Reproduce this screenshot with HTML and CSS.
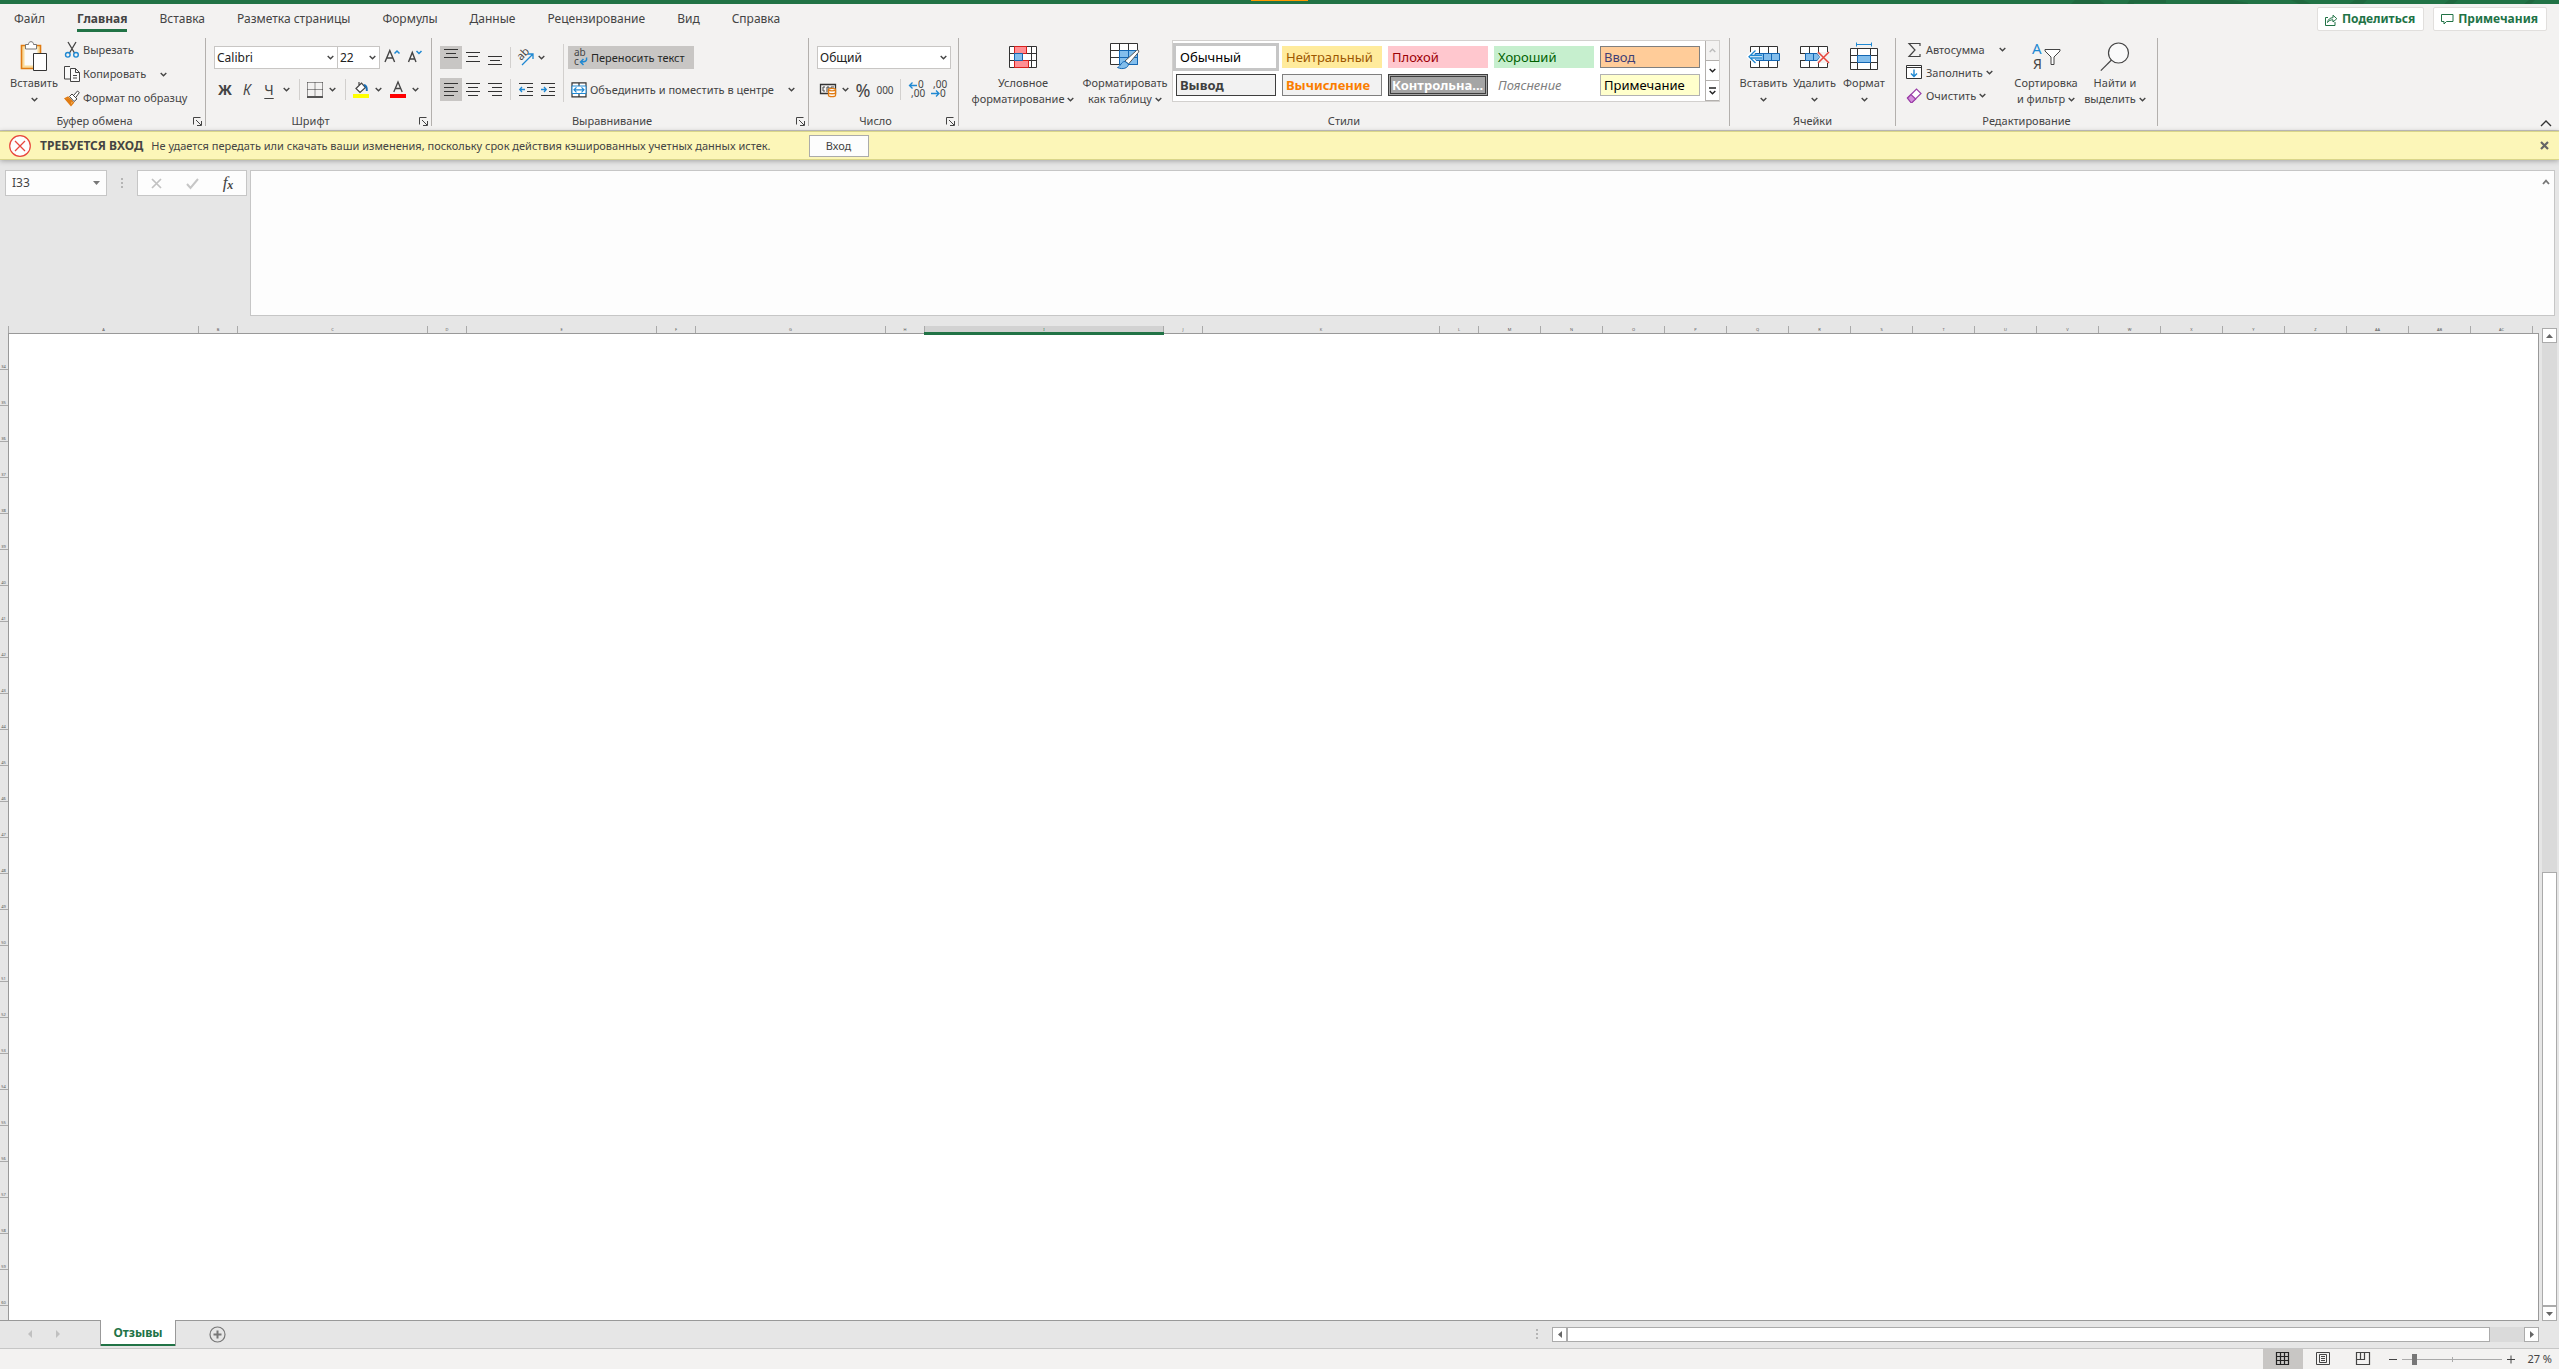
FILE: index.html
```html
<!DOCTYPE html>
<html lang="ru">
<head>
<meta charset="utf-8">
<title>Отзывы</title>
<link rel="stylesheet" href="styles.css">
</head>
<body>
<svg class="defs" aria-hidden="true">
  <symbol id="chev" viewBox="0 0 7 5"><path d="M.7 1 3.5 3.7 6.3 1" fill="none" stroke="currentColor" stroke-width="1.4"/></symbol>
  <symbol id="launch" viewBox="0 0 9 9"><path d="M.5 7.500V.5H7.500M3 3l5 5M8.500 4v4.500H4" fill="none" stroke="#444"/></symbol>
</svg>

<div class="title-strip">
  <span class="title-mark"></span>
  <svg class="title-art" width="500" height="4" viewBox="0 0 500 4" aria-hidden="true"><path d="M12 4 16 0h24l6 4M68 4l3-4h36v3H75v1zM141 0h32l16 3v1h-48zM232 0h12l8 4h-12zM296 0h12l-4 4h-14zM390 0h9l-5 4h-9zM470 0h6l-4 4h-7z" fill="#1f683f"/></svg>
</div>

<header class="tabbar">
  <nav class="tabs">
    <button class="tab">Файл</button>
    <button class="tab active">Главная</button>
    <button class="tab">Вставка</button>
    <button class="tab">Разметка страницы</button>
    <button class="tab">Формулы</button>
    <button class="tab">Данные</button>
    <button class="tab">Рецензирование</button>
    <button class="tab">Вид</button>
    <button class="tab">Справка</button>
  </nav>
  <button class="share"><svg width="13" height="13" viewBox="0 0 13 13"><path d="M3 4.500H.5v8h9.500V9M2.500 9.500C3 6.500 5 4.700 8 4.700V2.200L11.800 5.700 8 9V6.800c-2.500 0-4 .7-5.500 2.700z" fill="none" stroke="#217346"/></svg>Поделиться</button>
  <button class="share"><svg width="13" height="13" viewBox="0 0 13 13"><path d="M.5 1.500h11.500v7H5.500L3 11V8.500H.5z" fill="none" stroke="#217346"/></svg>Примечания</button>
</header>

<section class="ribbon">
  <div class="group g-clip">
    <div class="body">
      <button class="big paste">
        <span class="ico"><svg width="28" height="31" viewBox="0 0 28 31"><path d="M1.500 4.500h19v23h-19z" fill="#fadb9b" stroke="#e07b12" stroke-width="1.600"/><path d="M4.500 7.500h13v17h-13z" fill="#fbfbfa"/><path d="M5.500 8V3.500h3C8.500 1.500 9.500.7 11 .7s2.500.8 2.500 2.800h3V8z" fill="#fff" stroke="#777"/><path d="M13.500 12.500h13v17h-13z" fill="#fff" stroke="#333"/></svg></span>
        <span class="line">Вставить</span><span class="line"><svg class="chev"><use href="#chev"/></svg></span>
      </button>
      <div class="stack">
        <button class="row"><svg width="16" height="18" viewBox="0 0 16 18"><path d="M4 1l6.500 11M12 1 5.500 12" fill="none" stroke="#444" stroke-width="1.300"/><circle cx="3.800" cy="13.800" r="2.300" fill="none" stroke="#1e88d2" stroke-width="1.400"/><circle cx="12" cy="13.800" r="2.300" fill="none" stroke="#1e88d2" stroke-width="1.400"/></svg>Вырезать</button>
        <button class="row"><svg width="16" height="18" viewBox="0 0 16 18"><path d="M6 14H.5V1.500H6M6.500 3.500h5l4 4v9h-9z" fill="#fafafa" stroke="#444"/><path d="M11.500 3.500v4h4M9 10.500h4M9 13h4" fill="none" stroke="#444"/></svg>Копировать<svg class="chev far"><use href="#chev"/></svg></button>
        <button class="row"><svg width="16" height="16" viewBox="0 0 16 16"><path d="M1 8.500 4 7l5.500 5.500L7 15.500z" fill="#fadb9b" stroke="#e07b12" stroke-width="1.300"/><path d="M1 8.500 7 15l1-4-4-3z" fill="#e07b12"/><path d="M5.500 6.500 8 4l5 5-3 2.500zM9.500 5.500 13.500 1l1.800 1.500-3.500 5" fill="#fff" stroke="#444"/></svg>Формат по образцу</button>
      </div>
    </div>
    <div class="foot"><span>Буфер обмена</span><button class="launcher" aria-label="Буфер обмена"><svg width="9" height="9"><use href="#launch"/></svg></button></div>
  </div>
  <div class="divider"></div>

  <div class="group g-font">
    <div class="body tools">
      <div class="line-row">
        <span class="combo family"><select aria-label="Шрифт"><option>Calibri</option></select><svg class="chev"><use href="#chev"/></svg></span><span class="combo size"><select aria-label="Размер шрифта"><option>22</option></select><svg class="chev"><use href="#chev"/></svg></span>
        <button class="tool grow" aria-label="Увеличить размер шрифта"><svg width="17" height="17" viewBox="0 0 17 17"><path d="M1 13 5.800 1.500 10.600 13M2.600 9h6.400" fill="none" stroke="#444" stroke-width="1.400"/><path d="M10.500 4.500 13 2 15.500 4.500" fill="none" stroke="#1e88d2" stroke-width="1.500"/></svg></button>
        <button class="tool" aria-label="Уменьшить размер шрифта"><svg width="15" height="17" viewBox="0 0 15 17"><path d="M1.500 13 5.300 3.500 9 13M2.800 10h5" fill="none" stroke="#444" stroke-width="1.400"/><path d="M9.500 2 12 4.500 14.500 2" fill="none" stroke="#1e88d2" stroke-width="1.500"/></svg></button>
      </div>
      <div class="line-row">
        <button class="tool b">Ж</button><button class="tool i">К</button><button class="tool u">Ч</button><button class="drop" aria-label="Подчёркивание"><svg class="chev"><use href="#chev"/></svg></button>
        <span class="vsep"></span>
        <button class="tool" aria-label="Границы"><svg width="16" height="16" viewBox="0 0 16 16"><path d="M.5.5h15M.5.5v13M15.500.5v13M8 .5v13M.5 7.500h15" fill="none" stroke="#333" stroke-dasharray="1 1"/><path d="M0 15h16" stroke="#111" stroke-width="1.400"/></svg></button><button class="drop" aria-label="Виды границ"><svg class="chev"><use href="#chev"/></svg></button>
        <span class="vsep"></span>
        <button class="tool" aria-label="Цвет заливки"><svg width="16" height="17" viewBox="0 0 16 17"><path d="M3 7.500 8.500 2l4 4.500-5.500 5zM6 1v4" fill="#fff" stroke="#444" stroke-width="1.200"/><path d="M11 4c2.500.5 3 3 2.800 6" fill="none" stroke="#1b6fb5" stroke-width="2"/><path d="M0 13h16v4H0z" fill="#ff0"/></svg></button><button class="drop" aria-label="Выбор заливки"><svg class="chev"><use href="#chev"/></svg></button>
        <button class="tool color" aria-label="Цвет шрифта"><svg width="16" height="17" viewBox="0 0 16 17"><path d="M3.800 11 8 1l4.200 10M5.200 7.500h5.600" fill="none" stroke="#444" stroke-width="1.300"/><path d="M0 13h16v4H0z" fill="red"/></svg></button><button class="drop" aria-label="Выбор цвета"><svg class="chev"><use href="#chev"/></svg></button>
      </div>
    </div>
    <div class="foot"><span>Шрифт</span><button class="launcher" aria-label="Шрифт"><svg width="9" height="9"><use href="#launch"/></svg></button></div>
  </div>
  <div class="divider"></div>

  <div class="group g-align">
    <div class="body split">
      <div class="tools">
        <div class="line-row">
          <button class="tool on" aria-label="По верхнему краю"><svg width="14" height="17" viewBox="0 0 14 17"><path d="M0 0.500h14M2 4.500h10M0 8.500h14" stroke="#333"/></svg></button><button class="tool" aria-label="По середине"><svg width="14" height="17" viewBox="0 0 14 17"><path d="M0 3.500h14M2 7.500h10M0 12.500h14" stroke="#333"/></svg></button><button class="tool" aria-label="По нижнему краю"><svg width="14" height="17" viewBox="0 0 14 17"><path d="M0 7.500h14M2 11.500h10M0 15.500h14" stroke="#333"/></svg></button>
          <span class="vsep"></span>
          <button class="tool slim" aria-label="Ориентация"><svg width="17" height="17" viewBox="0 0 17 17"><text x="0" y="0" transform="translate(4 12) rotate(-45)" font-size="11" fill="#444">ab</text><path d="M5 16 15.500 5.500M11 5h5v5" fill="none" stroke="#1e88d2" stroke-width="1.300"/></svg></button><button class="drop" aria-label="Выбор ориентации"><svg class="chev"><use href="#chev"/></svg></button>
        </div>
        <div class="line-row">
          <button class="tool on" aria-label="По левому краю"><svg width="14" height="15" viewBox="0 0 14 15"><path d="M0 1.500h14M0 5.500h10M0 9.500h14M0 13.500h10" stroke="#333"/></svg></button><button class="tool" aria-label="По центру"><svg width="14" height="15" viewBox="0 0 14 15"><path d="M0 1.500h14M2 5.500h10M0 9.500h14M2 13.500h10" stroke="#333"/></svg></button><button class="tool" aria-label="По правому краю"><svg width="14" height="15" viewBox="0 0 14 15"><path d="M0 1.500h14M4 5.500h10M0 9.500h14M4 13.500h10" stroke="#333"/></svg></button>
          <span class="vsep"></span>
          <button class="tool" aria-label="Уменьшить отступ"><svg width="14" height="15" viewBox="0 0 14 15"><path d="M0 1.500h14M8 5.500h6M8 9.500h6M0 13.500h14" stroke="#333"/><path d="M6 7.500H1M3 5 .7 7.500 3 10" fill="none" stroke="#1e88d2" stroke-width="1.300"/></svg></button><button class="tool" aria-label="Увеличить отступ"><svg width="14" height="15" viewBox="0 0 14 15"><path d="M0 1.500h14M8 5.500h6M8 9.500h6M0 13.500h14" stroke="#333"/><path d="M0 7.500h5M3 5l2.300 2.500L3 10" fill="none" stroke="#1e88d2" stroke-width="1.300"/></svg></button>
        </div>
      </div>
      <span class="vsep tall"></span>
      <div class="tools">
        <button class="label-tool on"><svg width="16" height="17" viewBox="0 0 16 17"><text x="2" y="7" font-size="10" fill="#444">ab</text><text x="2" y="16" font-size="10" fill="#444">c</text><path d="M14.500 8.500c.8 3.500-1 4.500-6 4.500M11.500 10 8.500 13l3 3" fill="none" stroke="#1e88d2" stroke-width="1.500"/></svg>Переносить текст</button>
        <div class="line-row"><button class="label-tool"><svg width="16" height="16" viewBox="0 0 16 16"><path d="M1 .8h14v14H1zM8 1v14" fill="#fff" stroke="#333" stroke-width="1.200"/><path d="M1 4h14v7.500H1z" fill="#fff" stroke="#1e88d2"/><path d="M3 7.800h10M5.500 5.300 3 7.800l2.500 2.500M10.500 5.300 13 7.800l-2.500 2.500" fill="none" stroke="#1e88d2" stroke-width="1.200"/></svg>Объединить и поместить в центре</button><button class="drop gap" aria-label="Варианты объединения"><svg class="chev"><use href="#chev"/></svg></button></div>
      </div>
    </div>
    <div class="foot"><span>Выравнивание</span><button class="launcher" aria-label="Выравнивание"><svg width="9" height="9"><use href="#launch"/></svg></button></div>
  </div>
  <div class="divider"></div>

  <div class="group g-num">
    <div class="body tools">
      <span class="combo format"><select aria-label="Числовой формат"><option>Общий</option></select><svg class="chev"><use href="#chev"/></svg></span>
      <div class="line-row">
        <button class="tool" aria-label="Финансовый формат"><svg width="17" height="14" viewBox="0 0 17 14"><path d="M.5 1.500h15v9H.5z" fill="none" stroke="#333" stroke-width="1.300"/><path d="M5 4H3v4h2M7 9V4h2v2M11 4h3M11 4v2" fill="none" stroke="#444"/><path d="M8.500 6.500c0-1.500 7-1.500 7 0v6c0 1.500-7 1.500-7 0z" fill="#fff" stroke="#e07b12" stroke-width="1.300"/><path d="M8.500 7c1 1.200 6 1.200 7 0M8.500 10c1 1 6 1 7 0" fill="none" stroke="#e07b12" stroke-width="1.300"/></svg></button><button class="drop" aria-label="Выбор валюты"><svg class="chev"><use href="#chev"/></svg></button>
        <button class="tool pct">%</button><button class="tool zeros">000</button>
        <span class="vsep"></span>
        <button class="tool" aria-label="Увеличить разрядность"><svg width="17" height="17" viewBox="0 0 17 17"><text x="10" y="7" font-size="10" fill="#444">0</text><text x="3" y="16" font-size="10" fill="#444">,00</text><path d="M9 4.500H1.500M4.500 1.500l-3 3 3 3" fill="none" stroke="#1e88d2" stroke-width="1.300"/></svg></button><button class="tool" aria-label="Уменьшить разрядность"><svg width="17" height="17" viewBox="0 0 17 17"><text x="3" y="7" font-size="10" fill="#444">,00</text><text x="10" y="16" font-size="10" fill="#444">0</text><path d="M1 12.500h8M6 9.500l3 3-3 3" fill="none" stroke="#1e88d2" stroke-width="1.300"/></svg></button>
      </div>
    </div>
    <div class="foot"><span>Число</span><button class="launcher" aria-label="Число"><svg width="9" height="9"><use href="#launch"/></svg></button></div>
  </div>
  <div class="divider"></div>

  <div class="group g-style">
    <div class="body">
      <button class="big cond">
        <span class="ico"><svg width="28" height="22" viewBox="0 0 28 22"><path d="M.5.5h27v21H.5zM5.500.5v21M22.500.5v21M.5 7.500h27M.5 14.500h27" fill="#fff" stroke="#333"/><path d="M5.500.5h12v7h-12zM5.500 14.500h14v7h-14z" fill="#ff8f94" stroke="#d8201c"/><path d="M5.500 7.500h8v7h-8z" fill="#83beec" stroke="#1467b3"/></svg></span>
        <span class="line">Условное</span><span class="line">форматирование<svg class="chev near"><use href="#chev"/></svg></span>
      </button>
      <button class="big fmt">
        <span class="ico"><svg width="30" height="27" viewBox="0 0 30 27"><path d="M.5.500h27v21H.5zM9.500.500v21M18.500.500v21M.5 7.500h27M.5 14.500h27" fill="#fff" stroke="#333"/><path d="M9.500 7.500h18v14h-18zM18.500 7.500v14M9.500 14.500h18" fill="#83beec" stroke="#1467b3"/><path d="M15 18 26.500 7.500c1.500-1 3 0 2 1.700L18.500 21z" fill="#fff" stroke="#555"/><path d="M15 18.500c-4 0-4 4.500-7.500 6 5 2.500 11 .5 11-3.500z" fill="#83beec" stroke="#1467b3"/></svg></span>
        <span class="line">Форматировать</span><span class="line">как таблицу<svg class="chev near"><use href="#chev"/></svg></span>
      </button>
      <div class="gallery">
        <div class="cells">
          <button class="st normal">Обычный</button><button class="st neutral">Нейтральный</button><button class="st bad">Плохой</button><button class="st good">Хороший</button><button class="st input">Ввод</button>
          <button class="st output">Вывод</button><button class="st calc">Вычисление</button><button class="st check">Контрольна...</button><button class="st explain">Пояснение</button><button class="st note">Примечание</button>
        </div>
        <div class="gallery-nav">
          <button class="dim" aria-label="Вверх"><svg class="chev up"><use href="#chev"/></svg></button>
          <button aria-label="Вниз"><svg class="chev"><use href="#chev"/></svg></button>
          <button aria-label="Ещё"><svg width="7" height="8" viewBox="0 0 7 8"><path d="M0 1h7M.7 4 3.500 6.700 6.300 4" fill="none" stroke="#222" stroke-width="1.400"/></svg></button>
        </div>
      </div>
    </div>
    <div class="foot"><span>Стили</span></div>
  </div>
  <div class="divider"></div>

  <div class="group g-cells">
    <div class="body">
      <button class="big c1"><span class="ico"><svg width="32" height="22" viewBox="0 0 32 22"><path d="M2.500.500h27v21h-27zM11.500.500v21M20.500.500v21M2.500 7.500h27M2.500 14.500h27" fill="#fff" stroke="#333"/><path d="M7 7.500h24.500v7H7zM15.500 7.500v7M23.500 7.500v7" fill="#83beec" stroke="#1467b3"/><path d="M14 11H3M7.500 4 1 10.500 7.500 17" fill="none" stroke="#fff" stroke-width="4"/><path d="M14 9.500H3M14 12H3M7.500 4.500 1 10.700 7.500 17" fill="none" stroke="#1e88d2" stroke-width="1.300"/></svg></span><span class="line">Вставить</span><span class="line"><svg class="chev"><use href="#chev"/></svg></span></button>
      <button class="big c1"><span class="ico"><svg width="30" height="22" viewBox="0 0 30 22"><path d="M.5.500h27v21H.5zM9.500.500v21M18.500.500v21M.5 7.500h27M.5 14.500h27" fill="#fff" stroke="#333"/><path d="M0 8h5v6H0z" fill="#f3f2f1"/><path d="M5.500 7.500H17l3 3.500-3 3.500H5.500zM13.500 7.500v7" fill="#83beec" stroke="#1467b3"/><path d="M20 6h10v11H20l-3-2 3-4-3-4z" fill="#f3f2f1"/><path d="M18 6l11 11M29 6 18 17" stroke="#e8453c" stroke-width="1.500"/></svg></span><span class="line">Удалить</span><span class="line"><svg class="chev"><use href="#chev"/></svg></span></button>
      <button class="big c2"><span class="ico"><svg width="28" height="32" viewBox="0 0 28 32"><path d="M.5 7.500h27v21H.5zM7.500 7.500v21M20.500 7.500v21M.5 14.500h27M.5 21.500h27" fill="#fff" stroke="#333"/><path d="M7.500 14.500h13v7h-13z" fill="#83beec" stroke="#1467b3"/><path d="M6.500 3.500h15M6.500 1.500v4M21.500 1.500v4" stroke="#1e88d2"/></svg></span><span class="line">Формат</span><span class="line"><svg class="chev"><use href="#chev"/></svg></span></button>
    </div>
    <div class="foot"><span>Ячейки</span></div>
  </div>
  <div class="divider"></div>

  <div class="group g-edit">
    <div class="body">
      <div class="stack">
        <button class="row"><svg width="17" height="16" viewBox="0 0 17 16"><path d="M14 4V1.500H3L9 8l-6 6.500h11V12" fill="none" stroke="#444" stroke-width="1.200"/></svg>Автосумма<svg class="chev far"><use href="#chev"/></svg></button>
        <button class="row"><svg width="17" height="15" viewBox="0 0 17 15"><path d="M.5.500h15v13H.5zM.5 2.500h15" fill="#fff" stroke="#333"/><path d="M8 4.500v7M5 8.500l3 3 3-3" fill="none" stroke="#1e88d2" stroke-width="1.400"/></svg>Заполнить<svg class="chev near"><use href="#chev"/></svg></button>
        <button class="row"><svg width="17" height="16" viewBox="0 0 17 16"><path d="M1.500 10 10.500 1l4.500 4.500-9 9H5z" fill="#fff" stroke="#9b3fa8" stroke-width="1.200"/><path d="M1.500 10 5 6.500l4.700 4.500L6 14.500H5z" fill="#d48fdc" stroke="#9b3fa8" stroke-width="1.200"/></svg>Очистить<svg class="chev near"><use href="#chev"/></svg></button>
      </div>
      <button class="big sort"><span class="ico"><svg width="29" height="29" viewBox="0 0 29 29"><text x="0" y="12" font-size="15" fill="#1e88d2">А</text><text x="1" y="27" font-size="14" fill="#444">Я</text><path d="M13 7.500h15v1.500l-6 6v7.500h-3V15l-6-6z" fill="#fff" stroke="#444"/></svg></span><span class="line">Сортировка</span><span class="line">и фильтр<svg class="chev near"><use href="#chev"/></svg></span></button>
      <button class="big find"><span class="ico"><svg width="30" height="30" viewBox="0 0 30 30"><circle cx="18.500" cy="11" r="10" fill="#fafafa" stroke="#444" stroke-width="1.200"/><path d="M11.500 18 .8 28.700" stroke="#444" stroke-width="1.200"/></svg></span><span class="line">Найти и</span><span class="line">выделить<svg class="chev near"><use href="#chev"/></svg></span></button>
    </div>
    <div class="foot"><span>Редактирование</span></div>
  </div>
  <div class="divider"></div>
  <button class="collapse" aria-label="Свернуть ленту"><svg width="12" height="7" viewBox="0 0 12 7"><path d="M1 6l5-5 5 5" fill="none" stroke="#333" stroke-width="1.400"/></svg></button>
</section>

<div class="message" role="alert">
  <svg width="22" height="22" viewBox="0 0 22 22"><circle cx="11" cy="11" r="10.300" fill="#fdfdfd" stroke="#e8453c" stroke-width="1.200"/><path d="M6 6l10 10M16 6 6 16" stroke="#e8453c" stroke-width="1.300"/></svg>
  <strong>ТРЕБУЕТСЯ ВХОД</strong>
  <span class="message-text">Не удается передать или скачать ваши изменения, поскольку срок действия кэшированных учетных данных истек.</span>
  <button class="signin">Вход</button>
  <button class="dismiss" aria-label="Закрыть"><svg width="9" height="9" viewBox="0 0 9 9"><path d="M1 1l7 7M8 1 1 8" stroke="#666" stroke-width="2.200"/></svg></button>
</div>

<div class="formula-bar">
  <div class="namebox"><input type="text" value="I33" aria-label="Имя"><svg width="7" height="4" viewBox="0 0 7 4"><path d="M0 0h7L3.500 4z" fill="#777"/></svg></div>
  <svg class="grip" width="2" height="10" viewBox="0 0 2 10"><path d="M0 0h2v2H0zM0 4h2v2H0zM0 8h2v2H0z" fill="#b5b5b5"/></svg>
  <div class="fx">
    <button aria-label="Отмена"><svg width="11" height="11" viewBox="0 0 11 11"><path d="M1 1l9 9M10 1 1 10" stroke="#c2c2c2" stroke-width="1.700"/></svg></button>
    <button aria-label="Ввод"><svg width="13" height="11" viewBox="0 0 13 11"><path d="M1 6l3.500 4L12 1" fill="none" stroke="#c6c6c6" stroke-width="2"/></svg></button>
    <button class="fn"><i>f</i><small>x</small></button>
  </div>
  <div class="formula"><textarea aria-label="Строка формул"></textarea><button aria-label="Свернуть"><svg width="8" height="6" viewBox="0 0 8 6"><path d="M1 5l3-3.300L7 5" fill="none" stroke="#777" stroke-width="1.800"/></svg></button></div>
</div>

<main class="sheet">
  <div class="grid">
    <div class="corner"></div>
    <div class="cols"><span class="w">A</span><span class="n">B</span><span class="w">C</span><span class="n">D</span><span class="w">E</span><span class="n">F</span><span class="w">G</span><span class="n">H</span><span class="sel">I</span><span class="n">J</span><span class="x">K</span><span class="n">L</span><span>M</span><span>N</span><span>O</span><span>P</span><span>Q</span><span>R</span><span>S</span><span>T</span><span>U</span><span>V</span><span>W</span><span>X</span><span>Y</span><span>Z</span><span>AA</span><span>AB</span><span>AC</span></div>
    <div class="rows"><span>34</span><span>35</span><span>36</span><span>37</span><span>38</span><span>39</span><span>40</span><span>41</span><span>42</span><span>43</span><span>44</span><span>45</span><span>46</span><span>47</span><span>48</span><span>49</span><span>50</span><span>51</span><span>52</span><span>53</span><span>54</span><span>55</span><span>56</span><span>57</span><span>58</span><span>59</span><span>60</span></div>
    <div class="canvas"></div>
  </div>
  <div class="vscroll">
    <button aria-label="Вверх"><svg width="7" height="4" viewBox="0 0 7 4"><path d="M0 4h7L3.500 0z" fill="#666"/></svg></button>
    <div class="track"></div>
    <div class="thumb"></div>
    <button aria-label="Вниз"><svg width="7" height="4" viewBox="0 0 7 4"><path d="M0 0h7L3.500 4z" fill="#666"/></svg></button>
  </div>
</main>

<div class="sheetbar">
  <div class="sheet-tabs">
    <button class="nav" aria-label="Предыдущий лист"><svg width="4" height="8" viewBox="0 0 4 8"><path d="M4 0v8L0 4z" fill="#c0c0c0"/></svg></button>
    <button class="nav" aria-label="Следующий лист"><svg width="4" height="8" viewBox="0 0 4 8"><path d="M0 0v8l4-4z" fill="#c0c0c0"/></svg></button>
    <button class="sheet-tab">Отзывы</button>
    <button class="add" aria-label="Новый лист"><svg width="17" height="17" viewBox="0 0 17 17"><circle cx="8.500" cy="8.500" r="7.500" fill="none" stroke="#777" stroke-width="1.200"/><path d="M8.500 4.500v8M4.500 8.500h8" stroke="#777" stroke-width="2"/></svg></button>
    <svg class="grip" width="2" height="10" viewBox="0 0 2 10"><path d="M0 0h2v2H0zM0 4h2v2H0zM0 8h2v2H0z" fill="#b5b5b5"/></svg>
  </div>
  <div class="hscroll">
    <button aria-label="Влево"><svg width="4" height="7" viewBox="0 0 4 7"><path d="M4 0v7L0 3.500z" fill="#666"/></svg></button>
    <div class="thumb"></div>
    <div class="track"></div>
    <button aria-label="Вправо"><svg width="4" height="7" viewBox="0 0 4 7"><path d="M0 0v7l4-3.500z" fill="#666"/></svg></button>
  </div>
</div>

<footer class="status">
  <button class="view on" aria-label="Обычный"><svg width="14" height="14" viewBox="0 0 14 14"><path d="M.5.500h12v12H.5zM4.500.500v12M8.500.500v12M.5 4.500h12M.5 8.500h12" fill="none" stroke="#222" stroke-width="1.200"/></svg></button>
  <button class="view" aria-label="Разметка страницы"><svg width="14" height="14" viewBox="0 0 14 14"><path d="M.5.500h13v12H.5zM3.500 2.500h7v8h-7zM5 4.500h4M5 6.500h4M5 8.500h4" fill="none" stroke="#444"/></svg></button>
  <button class="view" aria-label="Страничный режим"><svg width="14" height="14" viewBox="0 0 14 14"><path d="M.5.500h13v12H.5zM4.500.500v7M8.500.500v7H.5" fill="none" stroke="#444" stroke-width="1.200"/></svg></button>
  <button class="zoom-btn out" aria-label="Уменьшить"><svg width="8" height="9" viewBox="0 0 8 9"><path d="M0 4.500h8" stroke="#444"/></svg></button>
  <input class="zoom" type="range" min="0" max="100" value="10" aria-label="Масштаб">
  <button class="zoom-btn" aria-label="Увеличить"><svg width="8" height="9" viewBox="0 0 8 9"><path d="M0 4.500h8M4 .5v8" stroke="#444"/></svg></button>
  <span class="percent">27 %</span>
</footer>
</body>
</html>
```
FILE: styles.css
```css
* { box-sizing: border-box; }
html { height: 100%; }
body {
  margin: 0;
  min-height: 100%;
  display: flex;
  flex-direction: column;
  background: #e6e6e6;
  color: #444;
  font: 12px/16px "Noto Sans", "Open Sans", sans-serif;
}
button, select, input, textarea { font: inherit; color: inherit; }
button {
  border: 0;
  padding: 0;
  background: none;
  display: flex;
  align-items: center;
  justify-content: center;
}
svg { display: block; flex: none; overflow: visible; }
.defs { position: absolute; width: 0; height: 0; }
.chev { width: 7px; height: 5px; }
.chev.near { margin-left: 3px; }
.row .chev.near { margin-left: 0; }
.chev.far { margin-left: 11px; }
.chev.up { transform: rotate(180deg); }

/* Title strip and ribbon tabs */
.title-strip {
  display: grid;
  grid-template-columns: 1fr 57px 1fr;
  height: 4px;
  background: #217346;
}
.title-mark { grid-column: 2; height: 1px; background: #f90; }
.title-art { justify-self: end; }
.tabbar {
  display: flex;
  align-items: flex-start;
  gap: 9px;
  height: 34px;
  padding: 0 12px 0 14px;
  background: #f3f2f1;
}
.tabs { display: flex; gap: 32px; flex: 1; }
.tab { height: 28px; padding-top: 5px; border-bottom: 3px solid transparent; }
.tab.active { font-weight: 700; border-color: #217346; }
.share {
  height: 24px;
  margin-top: 3px;
  padding: 0 8px 0 7px;
  gap: 4px;
  border: 1px solid #e1dfdd;
  border-radius: 2px;
  background: #fff;
  color: #217346;
  font-weight: 700;
}

/* Ribbon */
.ribbon {
  display: flex;
  height: 93px;
  background: #f3f2f1;
  border-bottom: 1px solid #c8c6c4;
  font-size: 11px;
}
.divider { width: 1px; height: 88px; background: #b3b0ad; }
.group { display: flex; flex-direction: column; }
.g-clip { width: 205px; }
.g-font { width: 225px; }
.g-align { width: 376px; }
.g-num { width: 149px; }
.g-style { width: 770px; }
.g-cells { width: 165px; }
.g-edit { width: 261px; }
.body { display: flex; height: 75px; }
.foot { display: flex; align-items: center; height: 18px; }
.foot span { flex: 1; text-align: center; }
.launcher { width: 16px; }
.big { flex-direction: column; justify-content: flex-start; white-space: nowrap; }
.ico { height: 37px; display: flex; align-items: center; }
.line { height: 16px; display: flex; align-items: center; justify-content: center; }
.paste { width: 60px; margin-left: 4px; }
.row { height: 24px; gap: 3px; white-space: nowrap; }
.g-edit .row { height: 23px; }
.stack { display: flex; flex-direction: column; align-items: flex-start; }

.tools { display: flex; flex-direction: column; align-items: flex-start; gap: 9px; padding-top: 8px; }
.g-font .tools, .g-num .tools { padding-left: 8px; }
.line-row { display: flex; align-items: center; height: 23px; }
.split { padding-left: 8px; }
.tool { width: 22px; height: 23px; }
.tool.slim { width: 20px; }
.tool.on, .label-tool.on { background: #c8c6c4; }
.drop { width: 13px; height: 23px; }
.drop.gap { margin-left: 5px; }
.vsep { width: 1px; height: 21px; margin: 0 4px; background: #d2d0ce; }
.drop + .vsep { margin-left: 6px; }
.vsep.tall { height: 58px; margin-top: 6px; }
.color { margin-left: 2px; }
.b { font-weight: 700; font-size: 14px; }
.i { font-style: italic; font-size: 14px; }
.u { text-decoration: underline; text-underline-offset: 3px; font-size: 14px; }
.pct { font-size: 18px; }
.zeros { font-size: 10px; }
.label-tool { height: 23px; padding: 0 6px 0 3px; gap: 3px; white-space: nowrap; }
.label-tool.on { min-width: 126px; justify-content: flex-start; padding-left: 4px; color: #262626; }
.combo {
  display: flex;
  align-items: center;
  height: 23px;
  border: 1px solid #c8c6c4;
  background: #fff;
  padding-right: 3px;
  font-size: 12px;
}
.combo select {
  flex: 1;
  min-width: 0;
  height: 21px;
  padding: 0 2px;
  border: 0;
  background: none;
  appearance: none;
  color: #222;
}
.family { width: 124px; }
.size { width: 43px; margin-left: -1px; }
.grow { margin-left: 1px; }
.format { width: 134px; }

.g-style .body { padding-left: 9px; }
.cond { width: 110px; }
.fmt { width: 94px; }
.gallery {
  display: flex;
  width: 548px;
  height: 62px;
  margin-top: 2px;
  border: 1px solid #d2d0ce;
  background: #fff;
}
.cells {
  flex: 1;
  display: grid;
  grid-template-columns: repeat(5, 100px);
  grid-auto-rows: 22px;
  gap: 6px;
  padding: 5px 3px;
}
.st { justify-content: flex-start; padding-left: 3px; font-size: 13px; border: 1px solid transparent; }
.normal { box-shadow: 0 0 0 3px #c6c6c6; color: #000; }
.neutral { background: #ffeb9c; color: #9c5700; }
.bad { background: #ffc7ce; color: #9c0006; }
.good { background: #c6efce; color: #006100; }
.input { background: #fc9; border-color: #7f7f7f; color: #3f3f76; }
.output { background: #f2f2f2; border-color: #3f3f3f; color: #3f3f3f; font-weight: 700; }
.calc { background: #f2f2f2; border-color: #7f7f7f; color: #fa7d00; font-weight: 700; }
.check {
  background: #a5a5a5;
  border-color: #3f3f3f;
  box-shadow: inset 0 0 0 1px #a5a5a5, inset 0 0 0 2px #3f3f3f;
  color: #fff;
  font-weight: 700;
}
.explain { color: #7f7f7f; font-style: italic; }
.note { background: #ffc; border-color: #b2b2b2; color: #000; }
.gallery-nav {
  display: grid;
  grid-template-rows: 1fr 1fr 1fr;
  width: 14px;
}
.gallery-nav button { border-left: 1px solid #b3b0ad; border-bottom: 1px solid #b3b0ad; color: #222; }
.gallery-nav .dim { background: #f3f2f1; color: #bbb; }

.g-cells .body { padding-left: 8px; }
.c1 { width: 51px; }
.c2 { width: 48px; }
.g-edit .stack { width: 115px; padding-left: 10px; }
.sort { width: 70px; }
.find { width: 68px; }
.collapse { margin: 80px 6px 0 auto; width: 14px; height: 10px; }

/* Sign-in message */
.message {
  display: flex;
  align-items: center;
  height: 29px;
  padding: 0 10px 0 9px;
  border: solid #d9d58a;
  border-width: 1px 0;
  background: #fcf6b8;
  box-shadow: 0 1px 5px rgba(0, 0, 0, .3);
  white-space: nowrap;
}
.message strong { margin: 0 8px 0 9px; }
.message-text { font-size: 11px; }
.signin { width: 60px; height: 22px; margin-left: 38px; border: 1px solid #ababab; background: #fdfdfd; font-size: 11px; }
.dismiss { margin-left: auto; }

/* Formula bar */
.formula-bar {
  display: flex;
  align-items: flex-start;
  padding: 10px 4px 10px 5px;
}
.namebox, .fx, .formula { display: flex; border: 1px solid #c6c6c6; background: #fdfdfd; }
.namebox { width: 102px; height: 26px; align-items: center; padding-right: 6px; }
.namebox input { flex: 1; min-width: 0; border: 0; padding: 0 6px; background: none; }
.formula-bar .grip { margin: 8px 14px 0; }
.fx { width: 110px; height: 26px; margin-right: 3px; }
.fx button { flex: 1; }
.fx .fn { font-family: "Liberation Serif", serif; font-size: 17px; }
.fn small { font-style: italic; font-weight: 700; font-size: 12px; padding-top: 3px; }
.formula { flex: 1; height: 146px; align-items: flex-start; }
.formula textarea { flex: 1; height: 144px; border: 0; resize: none; background: none; outline: 0; }
.formula > button { margin: 8px 4px 0; }

/* Worksheet */
.sheet { flex: 1; display: flex; }
.grid {
  flex: 1;
  min-width: 0;
  display: grid;
  grid-template-columns: 8px 1fr;
  grid-template-rows: 7px 1fr;
  border-bottom: 1px solid #999;
}
.cols, .rows { display: flex; font-size: 4px; line-height: 4px; color: #555; }
.cols { border-left: 1px solid #aaa; overflow-x: clip; }
.cols span { width: 62px; flex: none; padding-top: 2px; text-align: center; border-right: 1px solid #aaa; }
.cols .w { width: 190px; }
.cols .n { width: 39px; }
.cols .x { width: 237px; }
.cols .sel { position: relative; width: 239px; background: #d2d2d2; color: #217346; }
.sel::after {
  content: "";
  position: absolute;
  left: -1px;
  right: -1px;
  bottom: -2px;
  height: 3px;
  background: #217346;
}
.rows { flex-direction: column; padding-top: 1px; }
.rows span {
  height: 36px;
  padding-right: 1px;
  display: flex;
  align-items: flex-end;
  justify-content: center;
  border-bottom: 1px solid #aaa;
}
.canvas { border: solid #999; border-width: 1px 1px 0; background: #fff; }
.vscroll { display: flex; flex-direction: column; width: 15px; margin: 2px 2px 0 3px; }
.vscroll button, .vscroll .thumb, .hscroll button, .hscroll .thumb { border: 1px solid #ababab; background: #fff; }
.vscroll button { height: 15px; }
.vscroll .track { flex: 530; background: #dadada; }
.vscroll .thumb { flex: 432; }

/* Sheet tabs */
.sheetbar {
  display: grid;
  grid-template-columns: 1552fr 1007fr;
  height: 28px;
  border-bottom: 1px solid #c6c6c6;
}
.sheet-tabs { display: flex; align-items: flex-start; padding-left: 16px; }
.nav { width: 28px; height: 25px; }
.sheet-tab {
  width: 76px;
  height: 26px;
  margin: -1px 33px 0 28px;
  border: solid #999;
  border-width: 0 1px;
  box-shadow: inset 0 -2px #217346;
  background: #fff;
  color: #217346;
  font-weight: 700;
}
.add { height: 26px; }
.sheet-tabs .grip { margin: 8px 14px 0 auto; }
.hscroll { display: flex; height: 15px; margin: 6px 20px 0 0; }
.hscroll button { width: 15px; }
.hscroll .thumb { flex: 922; }
.hscroll .track { flex: 34; background: #dadada; }

/* Status bar */
.status {
  display: flex;
  align-items: center;
  justify-content: flex-end;
  height: 20px;
  padding-right: 7px;
  background: #f3f2f1;
}
.view { width: 40px; height: 20px; }
.view.on { background: #c8c6c4; }
.out { margin-left: 6px; }
.zoom {
  appearance: none;
  width: 100px;
  height: 11px;
  margin: 0 5px;
  background:
    linear-gradient(#aaa, #aaa) center / 1px 5px no-repeat,
    linear-gradient(#aaa, #aaa) center / 100% 1px no-repeat;
}
.zoom::-webkit-slider-thumb { appearance: none; width: 5px; height: 11px; background: #777; }
.percent { margin-left: 12px; font-size: 11px; }
```
